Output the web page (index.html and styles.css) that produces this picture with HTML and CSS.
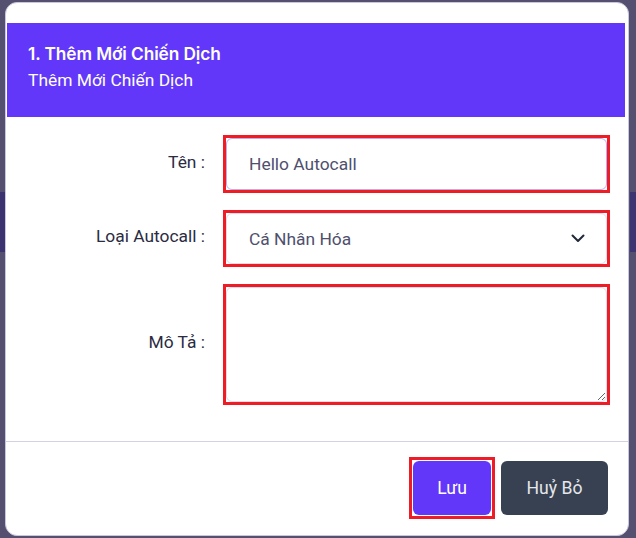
FILE: index.html
```html
<!DOCTYPE html>
<html lang="vi">
<head>
<meta charset="utf-8">
<title>Thêm Mới Chiến Dịch</title>
<link rel="stylesheet" href="styles.css">
</head>
<body>
<div class="backdrop-strip left"></div>
<div class="backdrop-strip right"></div>
<div class="modal">
  <div class="modal-header">
    <div class="title">1. Thêm Mới Chiến Dịch</div>
    <div class="subtitle">Thêm Mới Chiến Dịch</div>
  </div>
  <div class="modal-body">
    <div class="row">
      <label class="label">Tên :</label>
      <div class="hl">
        <input class="control input focus" type="text" value="Hello Autocall">
      </div>
    </div>
    <div class="row">
      <label class="label">Loại Autocall :</label>
      <div class="hl select-wrap">
        <div class="control select">Cá Nhân Hóa</div>
        <svg class="chevron" width="14" height="9" viewBox="0 0 14 9"><path d="M1.5 1.5 L7 7 L12.5 1.5" fill="none" stroke="#1f2937" stroke-width="2" stroke-linecap="round" stroke-linejoin="round"/></svg>
      </div>
    </div>
    <div class="row">
      <label class="label">Mô Tả :</label>
      <div class="hl">
        <textarea class="control area"></textarea>
      </div>
    </div>
  </div>
  <div class="modal-footer">
    <div class="hl hl-btn"><button class="btn btn-primary">Lưu</button></div>
    <button class="btn btn-dark">Huỷ Bỏ</button>
  </div>
</div>
</body>
</html>
```

FILE: styles.css
```css
* { box-sizing: border-box; }
html, body { margin: 0; height: 100%; }
body {
  background: #55506f;
  padding: 2px 7px 2px 5px;
  font-family: Roboto, "Liberation Sans", sans-serif;
  overflow: hidden;
  position: relative;
}
.backdrop-strip {
  position: absolute;
  top: 192px;
  width: 5px;
  height: 60px;
  background: #3b3370;
}
.backdrop-strip.left { left: 0; }
.backdrop-strip.right { right: 0; width: 6px; background: #3d3572; }
.modal {
  position: relative;
  width: 624px;
  height: 534px;
  background: #fff;
  border: 1px solid #c9c7df;
  border-radius: 12px;
  padding-top: 20px;
  display: flex;
  flex-direction: column;
}
.modal-header {
  background: #6237f9;
  height: 94px;
  flex: none;
  margin: 0 3px 0 1px;
  padding: 18px 20px 0 21px;
  color: #fff;
}
.title {
  font-family: Inter, Roboto, sans-serif;
  font-weight: 600;
  font-size: 17.3px;
  line-height: 26px;
  letter-spacing: -0.1px;
}
.subtitle {
  font-size: 17.4px;
  line-height: 26px;
}
.modal-body {
  padding: 18px 0 0 0;
  height: 324px;
  flex: none;
  display: flex;
  flex-direction: column;
  gap: 17px;
}
.row {
  display: grid;
  grid-template-columns: 199px 387px;
  column-gap: 18px;
  align-items: center;
}
.label {
  text-align: right;
  font-size: 17.4px;
  color: #2b2b42;
  padding-bottom: 5px;
}
.hl {
  border: 3px solid #ee1c25;
}
.control {
  display: block;
  font-family: Roboto, "Liberation Sans", sans-serif;
  font-size: 17.4px;
  color: #4f4f6e;
  border: 1px solid #dddcee;
  border-radius: 6px;
  background: #fff;
  padding: 0 21px 0 22px;
  width: 100%;
  margin: 0;
}
.input { height: 52px; outline: none; }
.focus { border-color: #b9adf8; }
.select-wrap {
  position: relative;
}
.select {
  height: 51px;
  display: flex;
  align-items: center;
}
.chevron {
  position: absolute;
  right: 22px;
  top: 21px;
}
.area {
  height: 115px;
  resize: vertical;
}
.modal-footer {
  border-top: 1px solid #d3d1e3;
  flex: 1;
  display: flex;
  justify-content: flex-end;
  align-items: center;
  gap: 6px;
  padding: 0 20px 1px 0;
}
.hl-btn { padding: 1px; }
.btn {
  display: block;
  height: 54px;
  border: none;
  border-radius: 6px;
  font-family: Roboto, "Liberation Sans", sans-serif;
  font-size: 17.6px;
  color: #fff;
}
.btn-primary {
  width: 78px;
  background: #6237f9;
}
.btn-dark {
  width: 107px;
  background: #374151;
  color: #e5e7eb;
}
```
